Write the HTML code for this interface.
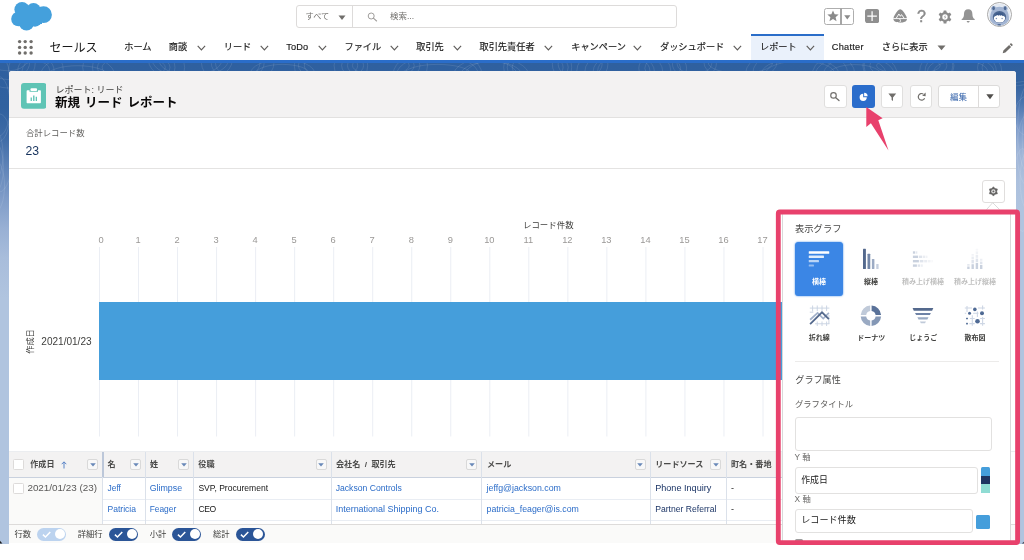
<!DOCTYPE html>
<html lang="ja">
<head>
<meta charset="utf-8">
<title>新規 リード レポート</title>
<style>
*{box-sizing:border-box;margin:0;padding:0}
html,body{width:1024px;height:560px;overflow:hidden;background:#fff}
body{position:relative;font-family:"Liberation Sans","Noto Sans CJK JP",sans-serif;color:#3e3e3c;font-size:9px;line-height:1}
#wrap{position:absolute;left:0;top:0;width:1024px;height:560px;will-change:transform}
.abs{position:absolute}
.t{position:absolute;white-space:nowrap;line-height:1}
/* global header */
#ghead{position:absolute;left:0;top:0;width:1024px;height:60px;background:#fff}
.nav{position:absolute;top:42.200px;font-size:9.200px;-webkit-text-stroke:0.150px #181818;color:#181818;white-space:nowrap;line-height:10px}
.chev{position:absolute;top:45px;width:9px;height:6px}
/* background */
#bgline{position:absolute;left:0;top:60px;width:1024px;height:3px;background:#2a6dc9}
#bg{position:absolute;left:0;top:63px;width:1024px;height:480.5px;background:linear-gradient(to bottom,#2f609f 0px,#30619f 45px,#3f6ca7 75px,#5f84b8 105px,#7f9cc8 135px,#98b0d4 165px,#a8bddb 195px,#b0c4df 235px,#b0c4df 480px)}
#bgr{position:absolute;left:1010px;top:63px;width:14px;height:480.5px;background:linear-gradient(to bottom,#2f609f 0px,#33639f 20px,#4a74ae 40px,#7b99c8 64px,#9fb5d7 91px,#acc0dd 117px,#b0c4df 145px,#b0c4df 480px)}
/* panel */
/* table */
.td{position:absolute;font-size:9px;white-space:nowrap;line-height:10px}
/* popover */
.tl{position:absolute;font-size:7px;font-weight:bold;color:#3e3e3c;white-space:nowrap;line-height:8px;text-align:center;width:60px}
.inp{position:absolute;background:#fff;border:1px solid #e2e1e0;border-radius:3px}
</style>
</head>
<body>
<div id="wrap">
<div id="ghead">
<svg class="abs" style="left:0;top:0" width="64" height="34" viewBox="0 0 64 34"><g fill="#44a0dc"><circle cx="22" cy="9.5" r="7.6"/><circle cx="33.5" cy="10.5" r="7.4"/><circle cx="43.5" cy="14.7" r="8.4"/><circle cx="18.5" cy="19" r="7.3"/><circle cx="26.5" cy="23" r="7.6"/><circle cx="35" cy="19.5" r="7.2"/><rect x="20" y="10" width="22" height="14"/></g></svg>
<svg class="abs" style="left:0;top:0" width="40" height="60" viewBox="0 0 40 60"><g fill="#706e6b"><circle cx="19.6" cy="41.6" r="1.7"/><circle cx="25.2" cy="41.6" r="1.7"/><circle cx="31.1" cy="41.6" r="1.7"/><circle cx="19.6" cy="47.4" r="1.7"/><circle cx="25.2" cy="47.4" r="1.7"/><circle cx="31.1" cy="47.4" r="1.7"/><circle cx="19.6" cy="53.0" r="1.7"/><circle cx="25.2" cy="53.0" r="1.7"/><circle cx="31.1" cy="53.0" r="1.7"/></g></svg>
<div class="t" style="left:49.4px;top:40.5px;font-size:12px;line-height:14px;color:#181818">セールス</div>
<div class="abs" style="left:296px;top:5px;width:381px;height:22.5px;border:1px solid #dddbda;border-radius:3px;background:#fff"></div>
<div class="abs" style="left:352px;top:5px;width:1px;height:22.5px;background:#dddbda"></div>
<div class="t" style="left:305.600px;top:11.800px;font-size:8.200px;line-height:10px;color:#706e6b">すべて</div>
<svg class="abs" style="left:337.5px;top:14.5px" width="8" height="6" viewBox="0 0 8 6"><path d="M0.5 0.5h7L4 5z" fill="#706e6b"/></svg>
<svg class="abs" style="left:367px;top:11.500px" width="11" height="10" viewBox="0 0 11 10"><circle cx="4.2" cy="4" r="3" fill="none" stroke="#a09e9c" stroke-width="1"/><path d="M6.4 6.2L9.6 9" stroke="#a09e9c" stroke-width="1.1" stroke-linecap="round"/></svg>
<div class="t" style="left:390px;top:11px;font-size:8.5px;line-height:10px;color:#706e6b">検索...</div>
<div class="abs" style="left:824px;top:7.600px;width:29.800px;height:17.300px;border:1.200px solid #aeaeae;border-radius:2.500px"></div>
<div class="abs" style="left:840.200px;top:7.600px;width:1.400px;height:17.300px;background:#a6a6a6"></div>
<svg class="abs" style="left:826.600px;top:10.400px" width="12" height="12" viewBox="0 0 12 12"><path d="M6 0.500l1.650 3.750 4 .35-3.050 2.650.95 3.950L6 9.100 2.450 11.200l.95-3.950L.35 4.600l4-.35z" fill="#8a8a8a"/></svg>
<svg class="abs" style="left:844.400px;top:14.800px" width="7" height="5" viewBox="0 0 7 5"><path d="M0.200 0.300h6.200L3.300 4.400z" fill="#8a8a8a"/></svg>
<svg class="abs" style="left:865.300px;top:9.100px" width="14.200" height="14.200" viewBox="0 0 14.200 14.200"><rect width="14.200" height="14.200" rx="2.600" fill="#8f8f8f"/><path d="M7.100 2.300v9.600M2.300 7.100h9.600" stroke="#fff" stroke-width="1.250"/></svg>
<svg class="abs" style="left:892.500px;top:9.400px" width="14.400" height="14.200" viewBox="0 0 14.400 14.200"><path d="M7.200 0.300c.9 0 1.700.5 2.500 1.500 1.700 2.100 4.300 5.700 4.300 8 0 2.600-3 3.900-6.800 3.900S.400 12.400.400 9.800c0-2.300 2.600-5.900 4.300-8C5.500.8 6.300.3 7.200.3z" fill="#8f8f8f"/><path d="M0.300 9.600h13.800" stroke="#fff" stroke-width="0.900" fill="none"/><path d="M3.200 9.300L5.900 5l1.500 2.300L8.500 5.600l2.700 3.700M6.600 9.800l.9 1.700-.6 1.900" stroke="#fff" stroke-width="0.950" fill="none" stroke-linejoin="round"/></svg>
<div class="t" style="left:917px;top:8.2px;font-size:16px;line-height:17px;color:#8c8c8c;-webkit-text-stroke:0.450px #8c8c8c">?</div>
<svg class="abs" style="left:938px;top:10px" width="14" height="14" viewBox="-7 -7 14 14"><g fill="#8c8c8c"><rect x="-1.5" y="-6.6" width="3" height="3.4" rx="0.6" transform="rotate(0)"/><rect x="-1.5" y="-6.6" width="3" height="3.4" rx="0.6" transform="rotate(60)"/><rect x="-1.5" y="-6.6" width="3" height="3.4" rx="0.6" transform="rotate(120)"/><rect x="-1.5" y="-6.6" width="3" height="3.4" rx="0.6" transform="rotate(180)"/><rect x="-1.5" y="-6.6" width="3" height="3.4" rx="0.6" transform="rotate(240)"/><rect x="-1.5" y="-6.6" width="3" height="3.4" rx="0.6" transform="rotate(300)"/><circle r="4.9"/></g><circle r="2.700" fill="#fff"/><path d="M0.400-1.900L-1 0.300h1L-0.300 1.900 1.100-0.300h-1z" fill="#8c8c8c"/></svg>
<svg class="abs" style="left:960.5px;top:9.4px" width="14.4" height="14" viewBox="0 0 14.4 14"><path d="M7.2 0.300c2.800 0 4.200 2 4.200 4.600 0 2.900.8 4.300 2.300 5.200v.9H.7v-.9C2.200 9.200 3 7.800 3 4.900 3 2.300 4.400.3 7.200.3z" fill="#939393"/><path d="M5.700 12h3c0 .9-.6 1.500-1.500 1.500S5.700 12.900 5.700 12z" fill="#939393"/></svg>
<svg class="abs" style="left:986.700px;top:2.200px" width="25" height="25" viewBox="-12.500 -12.500 25 25"><defs><clipPath id="avc"><circle r="10.900"/></clipPath></defs><circle r="12" fill="#fff" stroke="#9c9c9c" stroke-width="0.900"/><circle r="10.900" fill="#e3e9f2"/><g clip-path="url(#avc)"><circle cx="-5.900" cy="-6" r="2.500" fill="#a3b5d3"/><circle cx="5.600" cy="-6" r="2.500" fill="#a3b5d3"/><path d="M-9.200 13c-.3-5-.6-9.500.3-13.500C-8-4.800-4.800-7.700 0-7.700S8-4.800 8.900-.5c.9 4 .6 8.500.3 13.500z" fill="#a3b5d3"/><ellipse cx="-5.900" cy="-6.200" rx="1.250" ry="2" fill="#4f6a94"/><ellipse cx="5.600" cy="-6.200" rx="1.250" ry="2" fill="#4f6a94"/><ellipse cx="0" cy="2.600" rx="6.700" ry="6" fill="#4a6590"/><ellipse cx="0" cy="3.500" rx="5.700" ry="4.500" fill="#fff"/><path d="M-5.600 2.600c.3-2.600 2.600-4.300 5.600-4.300s5.300 1.700 5.600 4.300c-.8-.9-1.500-1.400-2.200-1.700l-.3.900-1.100-1.300-.7 1-1-1.300-.9 1.200-.9-.9c-1.500.5-3 1.100-4.100 2.100z" fill="#3c5a8a"/><circle cx="-3.100" cy="3.900" r="0.750" fill="#8093b8"/><circle cx="2.600" cy="3.900" r="0.750" fill="#8093b8"/><ellipse cx="-0.300" cy="10.900" rx="2" ry="1.400" fill="#4f6a94"/></g></svg>
<div class="abs" style="left:750.5px;top:33.900px;width:73px;height:26.100px;background:#eaf1fb;border-top:2px solid #2a6dc9"></div>
<div class="nav" style="left:124.25px;">ホーム</div>
<div class="nav" style="left:168.75px;">商談</div>
<svg class="chev" style="left:197px" viewBox="0 0 9 6"><path d="M0.700 0.800L4.400 4.800 8.100 0.800" fill="none" stroke="#5f5d5b" stroke-width="1.150"/></svg>
<div class="nav" style="left:223.75px;">リード</div>
<svg class="chev" style="left:260px" viewBox="0 0 9 6"><path d="M0.700 0.800L4.400 4.800 8.100 0.800" fill="none" stroke="#5f5d5b" stroke-width="1.150"/></svg>
<div class="nav" style="left:286.25px;letter-spacing:0.1px;">ToDo</div>
<svg class="chev" style="left:318px" viewBox="0 0 9 6"><path d="M0.700 0.800L4.400 4.800 8.100 0.800" fill="none" stroke="#5f5d5b" stroke-width="1.150"/></svg>
<div class="nav" style="left:344.5px;">ファイル</div>
<svg class="chev" style="left:390px" viewBox="0 0 9 6"><path d="M0.700 0.800L4.400 4.800 8.100 0.800" fill="none" stroke="#5f5d5b" stroke-width="1.150"/></svg>
<div class="nav" style="left:416.25px;">取引先</div>
<svg class="chev" style="left:452.5px" viewBox="0 0 9 6"><path d="M0.700 0.800L4.400 4.800 8.100 0.800" fill="none" stroke="#5f5d5b" stroke-width="1.150"/></svg>
<div class="nav" style="left:479.5px;">取引先責任者</div>
<svg class="chev" style="left:544px" viewBox="0 0 9 6"><path d="M0.700 0.800L4.400 4.800 8.100 0.800" fill="none" stroke="#5f5d5b" stroke-width="1.150"/></svg>
<div class="nav" style="left:571.25px;">キャンペーン</div>
<svg class="chev" style="left:633.2px" viewBox="0 0 9 6"><path d="M0.700 0.800L4.400 4.800 8.100 0.800" fill="none" stroke="#5f5d5b" stroke-width="1.150"/></svg>
<div class="nav" style="left:660px;">ダッシュボード</div>
<svg class="chev" style="left:733px" viewBox="0 0 9 6"><path d="M0.700 0.800L4.400 4.800 8.100 0.800" fill="none" stroke="#5f5d5b" stroke-width="1.150"/></svg>
<div class="nav" style="left:760px;">レポート</div>
<svg class="chev" style="left:805.5px" viewBox="0 0 9 6"><path d="M0.700 0.800L4.400 4.800 8.100 0.800" fill="none" stroke="#5f5d5b" stroke-width="1.150"/></svg>
<div class="nav" style="left:831.75px;letter-spacing:0.28px;">Chatter</div>
<div class="nav" style="left:881.75px;">さらに表示</div>
<svg class="abs" style="left:936.5px;top:44.800px" width="9" height="6" viewBox="0 0 9 6"><path d="M0.500 0.500h8L4.500 5.300z" fill="#706e6b"/></svg>
<svg class="abs" style="left:1002.300px;top:43px" width="11" height="11" viewBox="0 0 11 11"><path d="M0.700 10.300l.7-2.700 5.700-5.700 2 2-5.700 5.700zM7.700 1.300l.8-.8c.3-.3.700-.3 1 0l1 1c.3.300.3.700 0 1l-.8.800z" fill="#706e6b"/></svg>
</div>
<div id="bgline"></div>
<div id="bg"></div>
<div id="bgr"></div>
<svg class="abs" style="left:0;top:63px" width="1024" height="200" viewBox="0 63 1024 200"><g fill="none" stroke="#fff" stroke-opacity="0.130" stroke-width="0.800"><ellipse cx="7.8" cy="62.1" rx="17.8" ry="8.7"/><ellipse cx="7.8" cy="62.1" rx="21.9" ry="17.4"/><ellipse cx="7.8" cy="62.1" rx="27.5" ry="25.9"/><ellipse cx="35.9" cy="70.4" rx="13.8" ry="9.4"/><ellipse cx="35.9" cy="70.4" rx="18.1" ry="14.7"/><ellipse cx="35.9" cy="70.4" rx="27.4" ry="24.6"/><ellipse cx="77.6" cy="76.0" rx="30.6" ry="10.3"/><ellipse cx="77.6" cy="76.0" rx="37.3" ry="20.7"/><ellipse cx="133.7" cy="67.4" rx="31.6" ry="11.1"/><ellipse cx="133.7" cy="67.4" rx="36.3" ry="15.0"/><ellipse cx="133.7" cy="67.4" rx="41.3" ry="25.6"/><ellipse cx="133.7" cy="67.4" rx="51.0" ry="30.5"/><ellipse cx="190.4" cy="60.1" rx="31.4" ry="15.1"/><ellipse cx="190.4" cy="60.1" rx="38.0" ry="17.1"/><ellipse cx="190.4" cy="60.1" rx="41.9" ry="22.8"/><ellipse cx="237.7" cy="63.2" rx="22.2" ry="14.4"/><ellipse cx="237.7" cy="63.2" rx="26.4" ry="16.7"/><ellipse cx="237.7" cy="63.2" rx="36.2" ry="22.2"/><ellipse cx="282.6" cy="74.0" rx="27.1" ry="9.6"/><ellipse cx="282.6" cy="74.0" rx="32.3" ry="14.6"/><ellipse cx="331.0" cy="65.5" rx="26.7" ry="12.7"/><ellipse cx="331.0" cy="65.5" rx="32.6" ry="14.6"/><ellipse cx="331.0" cy="65.5" rx="36.7" ry="24.7"/><ellipse cx="380.8" cy="65.5" rx="28.4" ry="9.9"/><ellipse cx="380.8" cy="65.5" rx="33.4" ry="14.4"/><ellipse cx="380.8" cy="65.5" rx="39.2" ry="18.3"/><ellipse cx="380.8" cy="65.5" rx="46.7" ry="30.2"/><ellipse cx="437.5" cy="74.7" rx="34.0" ry="10.3"/><ellipse cx="437.5" cy="74.7" rx="40.9" ry="19.2"/><ellipse cx="437.5" cy="74.7" rx="44.4" ry="25.5"/><ellipse cx="491.1" cy="76.4" rx="26.5" ry="15.2"/><ellipse cx="491.1" cy="76.4" rx="31.3" ry="15.0"/><ellipse cx="491.1" cy="76.4" rx="38.1" ry="19.3"/><ellipse cx="537.7" cy="67.3" rx="25.4" ry="14.3"/><ellipse cx="537.7" cy="67.3" rx="30.5" ry="15.3"/><ellipse cx="537.7" cy="67.3" rx="34.0" ry="25.9"/><ellipse cx="580.1" cy="64.2" rx="22.0" ry="13.9"/><ellipse cx="580.1" cy="64.2" rx="27.8" ry="20.8"/><ellipse cx="623.8" cy="70.9" rx="26.1" ry="16.0"/><ellipse cx="623.8" cy="70.9" rx="30.5" ry="17.2"/><ellipse cx="623.8" cy="70.9" rx="38.8" ry="21.3"/><ellipse cx="623.8" cy="70.9" rx="47.0" ry="26.8"/><ellipse cx="662.7" cy="68.2" rx="17.9" ry="11.5"/><ellipse cx="662.7" cy="68.2" rx="23.9" ry="16.4"/><ellipse cx="694.4" cy="63.8" rx="17.4" ry="9.9"/><ellipse cx="694.4" cy="63.8" rx="22.0" ry="14.9"/><ellipse cx="740.4" cy="62.8" rx="32.1" ry="10.5"/><ellipse cx="740.4" cy="62.8" rx="36.4" ry="17.6"/><ellipse cx="800.2" cy="73.1" rx="34.2" ry="12.0"/><ellipse cx="800.2" cy="73.1" rx="38.4" ry="14.7"/><ellipse cx="800.2" cy="73.1" rx="47.4" ry="25.2"/><ellipse cx="800.2" cy="73.1" rx="54.5" ry="25.7"/><ellipse cx="854.8" cy="76.0" rx="27.3" ry="11.4"/><ellipse cx="854.8" cy="76.0" rx="31.9" ry="19.4"/><ellipse cx="854.8" cy="76.0" rx="40.1" ry="20.7"/><ellipse cx="854.8" cy="76.0" rx="42.8" ry="27.0"/><ellipse cx="908.4" cy="65.6" rx="31.8" ry="8.4"/><ellipse cx="908.4" cy="65.6" rx="38.5" ry="14.0"/><ellipse cx="908.4" cy="65.6" rx="45.6" ry="23.3"/><ellipse cx="908.4" cy="65.6" rx="44.4" ry="24.3"/><ellipse cx="960.7" cy="71.4" rx="26.8" ry="11.1"/><ellipse cx="960.7" cy="71.4" rx="33.2" ry="14.7"/><ellipse cx="960.7" cy="71.4" rx="35.7" ry="22.9"/><ellipse cx="960.7" cy="71.4" rx="41.1" ry="26.2"/><ellipse cx="1011.9" cy="67.6" rx="29.8" ry="15.0"/><ellipse cx="1011.9" cy="67.6" rx="34.4" ry="18.4"/><ellipse cx="1055.7" cy="77.8" rx="19.9" ry="11.5"/><ellipse cx="1055.7" cy="77.8" rx="24.2" ry="18.6"/><ellipse cx="1055.7" cy="77.8" rx="28.6" ry="22.5"/><ellipse cx="-2.9" cy="167.4" rx="6.3" ry="22.4"/><ellipse cx="1028.5" cy="180.5" rx="8.4" ry="30.4"/><ellipse cx="-5.1" cy="186.0" rx="9.6" ry="26.2"/><ellipse cx="1029.7" cy="128.9" rx="12.1" ry="45.7"/><ellipse cx="-1.2" cy="97.7" rx="13.3" ry="44.0"/><ellipse cx="1022.4" cy="190.0" rx="9.3" ry="41.3"/><ellipse cx="-0.7" cy="152.9" rx="13.5" ry="39.1"/><ellipse cx="1029.2" cy="137.9" rx="6.9" ry="36.7"/><ellipse cx="-1.5" cy="106.3" rx="11.7" ry="29.8"/><ellipse cx="1028.3" cy="115.9" rx="13.8" ry="20.1"/><ellipse cx="-4.0" cy="154.8" rx="7.0" ry="23.3"/><ellipse cx="1027.4" cy="150.1" rx="10.2" ry="35.6"/></g></svg>
<div class="abs" style="left:8.600px;top:71px;width:1007px;height:472.5px;background:#fff;border-radius:3px 3px 0 0"></div>
<div class="abs" style="left:8.600px;top:71px;width:1007px;height:46.5px;background:#f3f2f2;border-bottom:1px solid #e2e1e0;border-radius:3px 3px 0 0"></div>
<svg class="abs" style="left:20.600px;top:83px" width="25.500" height="25.700" viewBox="0 0 25.500 25.700"><rect width="25.500" height="25.700" rx="3" fill="#5fc4b5"/><path d="M6.600 7.300h1.900v1.400h8.500V7.300h1.900c.6 0 1 .4 1 1v11c0 .6-.4 1-1 1H6.600c-.6 0-1-.4-1-1v-11c0-.6.400-1 1-1z" fill="#fff"/><rect x="9.400" y="5.300" width="6.700" height="2.700" rx="1.100" fill="#fff"/><path d="M9.600 14.500h1.300v3.600H9.600zM12.100 12.600h1.400v5.500h-1.400zM14.700 13.800h1.300v4.300h-1.300z" fill="#5fc4b5"/></svg>
<div class="t" style="left:55.600px;top:84.800px;font-size:9px;line-height:11px;color:#3e3e3c">レポート: リード</div>
<div class="t" style="left:55px;top:95.600px;font-size:12.500px;word-spacing:1.500px;line-height:14px;font-weight:bold;color:#080707">新規 リード レポート</div>
<div class="abs" style="left:824.4px;top:85.400px;width:22.200px;height:22.200px;background:#fff;border:1px solid #e0dfde;border-radius:3px"></div>
<div class="abs" style="left:881.3px;top:85.400px;width:22.200px;height:22.200px;background:#fff;border:1px solid #e0dfde;border-radius:3px"></div>
<div class="abs" style="left:909.9px;top:85.400px;width:22.200px;height:22.200px;background:#fff;border:1px solid #e0dfde;border-radius:3px"></div>
<div class="abs" style="left:852.400px;top:85.400px;width:22.700px;height:22.300px;background:#2b6dcb;border-radius:3px"></div>
<div class="abs" style="left:938.300px;top:85.400px;width:62.100px;height:22.200px;background:#fff;border:1px solid #dcdbda;border-radius:3px"></div>
<div class="abs" style="left:978px;top:85.400px;width:1px;height:22.200px;background:#dddbda"></div>
<div class="t" style="left:950px;top:91.500px;font-size:8.500px;line-height:10px;color:#2f5fa8">編集</div>
<svg class="abs" style="left:986px;top:94px" width="8" height="6" viewBox="0 0 8 6"><path d="M0.300 0.300h7.400L4 5.200z" fill="#514f4d"/></svg>
<svg class="abs" style="left:829.200px;top:91.200px" width="12" height="12" viewBox="0 0 12 12"><circle cx="4.500" cy="4.400" r="2.750" fill="none" stroke="#706e6b" stroke-width="1.150"/><path d="M6.500 6.500L10 9.500" stroke="#706e6b" stroke-width="1.300" stroke-linecap="round"/></svg>
<svg class="abs" style="left:859px;top:92px" width="10" height="10" viewBox="0 0 10 10"><path d="M4.200 1.700v3.600h3.600a3.600 3.600 0 1 1-3.600-3.600z" fill="#fff"/><path d="M5.100 0.800a3.500 3.500 0 0 1 3.500 3.500h-3.500z" fill="#fff"/></svg>
<svg class="abs" style="left:888px;top:92.500px" width="9" height="9" viewBox="0 0 9 9"><path d="M0.400 0.600h7.800L5 4.400v3.600L3.600 7V4.400z" fill="#706e6b"/></svg>
<svg class="abs" style="left:916.500px;top:92px" width="10" height="10" viewBox="0 0 10 10"><path d="M7.600 6.200A3.300 3.300 0 1 1 6.300 2" fill="none" stroke="#706e6b" stroke-width="1.200"/><path d="M5.200 3.800L8.600 0.600v3.600z" fill="#706e6b"/></svg>
<div class="abs" style="left:8.600px;top:168px;width:1007px;height:1px;background:#e4e3e2"></div>
<div class="t" style="left:26px;top:127.500px;font-size:8.400px;line-height:10px;color:#5f5e5c">合計レコード数</div>
<div class="t" style="left:25.500px;top:143.500px;font-size:12.200px;line-height:14px;color:#16325c">23</div>
<div class="abs" style="left:982px;top:180px;width:23px;height:22.500px;background:#fff;border:1px solid #e0dedd;border-radius:3px"></div>
<svg class="abs" style="left:988px;top:186px" width="11" height="11" viewBox="-5.400 -5.400 11 11"><polygon points="0.00,-4.70 1.65,-2.86 4.07,-2.35 3.30,0.00 4.07,2.35 1.65,2.86 0.00,4.70 -1.65,2.86 -4.07,2.35 -3.30,0.00 -4.07,-2.35 -1.65,-2.86" fill="#626160" stroke="#626160" stroke-width="0.500" stroke-linejoin="round"/><circle r="2.150" fill="#fff" fill-opacity="0.800"/><circle r="0.950" fill="#626160"/></svg>
<svg class="abs" style="left:0;top:0;font-family:'Liberation Sans','Noto Sans CJK JP',sans-serif" width="1024" height="560" viewBox="0 0 1024 560"><line x1="99.50" y1="247" x2="99.50" y2="436.500" stroke="#ebeef4" stroke-width="1"/><text x="101.10" y="243" text-anchor="middle" font-size="9.300" fill="#9a9896">0</text><line x1="138.53" y1="247" x2="138.53" y2="436.500" stroke="#ebeef4" stroke-width="1"/><text x="138.03" y="243" text-anchor="middle" font-size="9.300" fill="#9a9896">1</text><line x1="177.56" y1="247" x2="177.56" y2="436.500" stroke="#ebeef4" stroke-width="1"/><text x="177.06" y="243" text-anchor="middle" font-size="9.300" fill="#9a9896">2</text><line x1="216.59" y1="247" x2="216.59" y2="436.500" stroke="#ebeef4" stroke-width="1"/><text x="216.09" y="243" text-anchor="middle" font-size="9.300" fill="#9a9896">3</text><line x1="255.62" y1="247" x2="255.62" y2="436.500" stroke="#ebeef4" stroke-width="1"/><text x="255.12" y="243" text-anchor="middle" font-size="9.300" fill="#9a9896">4</text><line x1="294.65" y1="247" x2="294.65" y2="436.500" stroke="#ebeef4" stroke-width="1"/><text x="294.15" y="243" text-anchor="middle" font-size="9.300" fill="#9a9896">5</text><line x1="333.68" y1="247" x2="333.68" y2="436.500" stroke="#ebeef4" stroke-width="1"/><text x="333.18" y="243" text-anchor="middle" font-size="9.300" fill="#9a9896">6</text><line x1="372.71" y1="247" x2="372.71" y2="436.500" stroke="#ebeef4" stroke-width="1"/><text x="372.21" y="243" text-anchor="middle" font-size="9.300" fill="#9a9896">7</text><line x1="411.74" y1="247" x2="411.74" y2="436.500" stroke="#ebeef4" stroke-width="1"/><text x="411.24" y="243" text-anchor="middle" font-size="9.300" fill="#9a9896">8</text><line x1="450.77" y1="247" x2="450.77" y2="436.500" stroke="#ebeef4" stroke-width="1"/><text x="450.27" y="243" text-anchor="middle" font-size="9.300" fill="#9a9896">9</text><line x1="489.80" y1="247" x2="489.80" y2="436.500" stroke="#ebeef4" stroke-width="1"/><text x="489.30" y="243" text-anchor="middle" font-size="9.300" fill="#9a9896">10</text><line x1="528.83" y1="247" x2="528.83" y2="436.500" stroke="#ebeef4" stroke-width="1"/><text x="528.33" y="243" text-anchor="middle" font-size="9.300" fill="#9a9896">11</text><line x1="567.86" y1="247" x2="567.86" y2="436.500" stroke="#ebeef4" stroke-width="1"/><text x="567.36" y="243" text-anchor="middle" font-size="9.300" fill="#9a9896">12</text><line x1="606.89" y1="247" x2="606.89" y2="436.500" stroke="#ebeef4" stroke-width="1"/><text x="606.39" y="243" text-anchor="middle" font-size="9.300" fill="#9a9896">13</text><line x1="645.92" y1="247" x2="645.92" y2="436.500" stroke="#ebeef4" stroke-width="1"/><text x="645.42" y="243" text-anchor="middle" font-size="9.300" fill="#9a9896">14</text><line x1="684.95" y1="247" x2="684.95" y2="436.500" stroke="#ebeef4" stroke-width="1"/><text x="684.45" y="243" text-anchor="middle" font-size="9.300" fill="#9a9896">15</text><line x1="723.98" y1="247" x2="723.98" y2="436.500" stroke="#ebeef4" stroke-width="1"/><text x="723.48" y="243" text-anchor="middle" font-size="9.300" fill="#9a9896">16</text><line x1="763.01" y1="247" x2="763.01" y2="436.500" stroke="#ebeef4" stroke-width="1"/><text x="762.51" y="243" text-anchor="middle" font-size="9.300" fill="#9a9896">17</text><rect x="99" y="302" width="700" height="78" fill="#459edb"/><text x="548.300" y="227.600" text-anchor="middle" font-size="8.450" fill="#3e3e3c">レコード件数</text><text x="41.300" y="345" font-size="10.050" fill="#3e3e3c">2021/01/23</text><text transform="translate(33,341.500) rotate(-90)" text-anchor="middle" font-size="8.200" fill="#3e3e3c">作成日</text></svg>
<div class="abs" style="left:9px;top:451px;width:1006.500px;height:27px;background:#f3f2f2;border-top:1px solid #ebedf0;border-bottom:1px solid #c9d1de"></div>
<div class="abs" style="left:9px;top:478px;width:93px;height:47px;background:#fafaf9"></div>
<div class="abs" style="left:103px;top:499px;width:912.500px;height:1px;background:#e9edf3"></div>
<div class="abs" style="left:103px;top:520.300px;width:912.500px;height:1px;background:#e9edf3"></div>
<div class="abs" style="left:102px;top:452px;width:1px;height:73px;background:#dbe1ea"></div>
<div class="abs" style="left:145px;top:452px;width:1px;height:73px;background:#dbe1ea"></div>
<div class="abs" style="left:193px;top:452px;width:1px;height:73px;background:#dbe1ea"></div>
<div class="abs" style="left:331px;top:452px;width:1px;height:73px;background:#dbe1ea"></div>
<div class="abs" style="left:481px;top:452px;width:1px;height:73px;background:#dbe1ea"></div>
<div class="abs" style="left:650px;top:452px;width:1px;height:73px;background:#dbe1ea"></div>
<div class="abs" style="left:726px;top:452px;width:1px;height:73px;background:#dbe1ea"></div>
<div class="abs" style="left:102px;top:452px;width:1.500px;height:25px;background:#bcc7d9"></div>
<div class="t" style="left:30.2px;top:459.500px;font-size:8.100px;line-height:10px;font-weight:bold;color:#4a4a49">作成日</div>
<div class="t" style="left:107.4px;top:459.500px;font-size:8.100px;line-height:10px;font-weight:bold;color:#4a4a49">名</div>
<div class="t" style="left:150px;top:459.500px;font-size:8.100px;line-height:10px;font-weight:bold;color:#4a4a49">姓</div>
<div class="t" style="left:198.3px;top:459.500px;font-size:8.100px;line-height:10px;font-weight:bold;color:#4a4a49">役職</div>
<div class="t" style="left:336px;top:459.500px;font-size:8.100px;line-height:10px;font-weight:bold;color:#4a4a49;word-spacing:2.200px">会社名 / 取引先</div>
<div class="t" style="left:487px;top:459.500px;font-size:8.100px;line-height:10px;font-weight:bold;color:#4a4a49">メール</div>
<div class="t" style="left:655.2px;top:459.500px;font-size:8.100px;line-height:10px;font-weight:bold;color:#4a4a49">リードソース</div>
<div class="t" style="left:731px;top:459.500px;font-size:8.100px;line-height:10px;font-weight:bold;color:#4a4a49">町名・番地</div>
<svg class="abs" style="left:60.500px;top:460.500px" width="6" height="8" viewBox="0 0 6 8"><path d="M3 7.500V1M0.700 3.200L3 0.800 5.300 3.200" fill="none" stroke="#4a78c2" stroke-width="0.900"/></svg>
<div class="abs" style="left:87px;top:459px;width:11.200px;height:11px;background:#f8f8f8;border:1px solid #d9d9d9;border-radius:2px"></div>
<svg class="abs" style="left:89.7px;top:462.800px" width="6" height="4" viewBox="0 0 6 4"><path d="M0.200 0.200h5.600L3 3.600z" fill="#6888b8"/></svg>
<div class="abs" style="left:130px;top:459px;width:11.200px;height:11px;background:#f8f8f8;border:1px solid #d9d9d9;border-radius:2px"></div>
<svg class="abs" style="left:132.7px;top:462.800px" width="6" height="4" viewBox="0 0 6 4"><path d="M0.200 0.200h5.600L3 3.600z" fill="#6888b8"/></svg>
<div class="abs" style="left:178px;top:459px;width:11.200px;height:11px;background:#f8f8f8;border:1px solid #d9d9d9;border-radius:2px"></div>
<svg class="abs" style="left:180.7px;top:462.800px" width="6" height="4" viewBox="0 0 6 4"><path d="M0.200 0.200h5.600L3 3.600z" fill="#6888b8"/></svg>
<div class="abs" style="left:315.5px;top:459px;width:11.200px;height:11px;background:#f8f8f8;border:1px solid #d9d9d9;border-radius:2px"></div>
<svg class="abs" style="left:318.2px;top:462.800px" width="6" height="4" viewBox="0 0 6 4"><path d="M0.200 0.200h5.600L3 3.600z" fill="#6888b8"/></svg>
<div class="abs" style="left:466px;top:459px;width:11.200px;height:11px;background:#f8f8f8;border:1px solid #d9d9d9;border-radius:2px"></div>
<svg class="abs" style="left:468.7px;top:462.800px" width="6" height="4" viewBox="0 0 6 4"><path d="M0.200 0.200h5.600L3 3.600z" fill="#6888b8"/></svg>
<div class="abs" style="left:634.7px;top:459px;width:11.200px;height:11px;background:#f8f8f8;border:1px solid #d9d9d9;border-radius:2px"></div>
<svg class="abs" style="left:637.4000000000001px;top:462.800px" width="6" height="4" viewBox="0 0 6 4"><path d="M0.200 0.200h5.600L3 3.600z" fill="#6888b8"/></svg>
<div class="abs" style="left:710.2px;top:459px;width:11.200px;height:11px;background:#f8f8f8;border:1px solid #d9d9d9;border-radius:2px"></div>
<svg class="abs" style="left:712.9000000000001px;top:462.800px" width="6" height="4" viewBox="0 0 6 4"><path d="M0.200 0.200h5.600L3 3.600z" fill="#6888b8"/></svg>
<div class="abs" style="left:13px;top:459px;width:11px;height:11px;background:#fff;border:1px solid #dddbda;border-radius:1.500px"></div>
<div class="abs" style="left:13px;top:483px;width:11px;height:10.800px;background:#fff;border:1px solid #dddbda;border-radius:1.500px"></div>
<div class="t" style="left:27.400px;top:481.900px;font-size:9.900px;line-height:11px;color:#5a5958">2021/01/23 (23)</div>
<div class="td" style="left:107.5px;top:482.8px;font-size:8.45px;color:#2b6cc8">Jeff</div>
<div class="td" style="left:149.7px;top:482.8px;font-size:8.85px;color:#2b6cc8">Glimpse</div>
<div class="td" style="left:198.4px;top:482.8px;font-size:8.55px;color:#181818">SVP, Procurement</div>
<div class="td" style="left:335.7px;top:482.8px;font-size:8.65px;color:#2b6cc8">Jackson Controls</div>
<div class="td" style="left:486.6px;top:482.8px;font-size:8.8px;color:#2b6cc8">jeffg@jackson.com</div>
<div class="td" style="left:655.2px;top:482.8px;font-size:9.1px;color:#1c3566">Phone Inquiry</div>
<div class="td" style="left:731px;top:482.8px;font-size:9px;color:#181818">-</div>
<div class="td" style="left:107.5px;top:504.4px;font-size:8.55px;color:#2b6cc8">Patricia</div>
<div class="td" style="left:149.7px;top:504.4px;font-size:8.4px;color:#2b6cc8">Feager</div>
<div class="td" style="left:198.4px;top:504.4px;font-size:8.6px;color:#181818;letter-spacing:-0.400px">CEO</div>
<div class="td" style="left:335.7px;top:504.4px;font-size:8.98px;color:#2b6cc8">International Shipping Co.</div>
<div class="td" style="left:486.6px;top:504.4px;font-size:8.77px;color:#2b6cc8">patricia_feager@is.com</div>
<div class="td" style="left:655.2px;top:504.4px;font-size:8.6px;color:#1c3566">Partner Referral</div>
<div class="td" style="left:731px;top:504.4px;font-size:9px;color:#181818">-</div>
<div class="abs" style="left:9px;top:524.200px;width:1006.500px;height:19.300px;background:#fafaf9;border-top:1px solid #dddbda"></div>
<div class="t" style="left:14.5px;top:529px;font-size:8.300px;line-height:10px;color:#3e3e3c">行数</div>
<div class="t" style="left:77.7px;top:529px;font-size:8.300px;line-height:10px;color:#3e3e3c">詳細行</div>
<div class="t" style="left:149.7px;top:529px;font-size:8.300px;line-height:10px;color:#3e3e3c">小計</div>
<div class="t" style="left:213px;top:529px;font-size:8.300px;line-height:10px;color:#3e3e3c">総計</div>
<div class="abs" style="left:37.4px;top:527.800px;width:29px;height:13px;border-radius:6.500px;background:#bcd3ef"><i style="position:absolute;right:1.500px;top:1.500px;width:10px;height:10px;border-radius:5px;background:#fff;display:block"></i><svg style="position:absolute;left:4.600px;top:3.100px" width="9.200" height="6.900" viewBox="0 0 8 6"><path d="M0.800 3.200L3 5.200 7.200 0.800" fill="none" stroke="#fff" stroke-width="1.300"/></svg></div>
<div class="abs" style="left:109px;top:527.800px;width:29px;height:13px;border-radius:6.500px;background:#2b5597"><i style="position:absolute;right:1.500px;top:1.500px;width:10px;height:10px;border-radius:5px;background:#fff;display:block"></i><svg style="position:absolute;left:4.600px;top:3.100px" width="9.200" height="6.900" viewBox="0 0 8 6"><path d="M0.800 3.200L3 5.200 7.200 0.800" fill="none" stroke="#fff" stroke-width="1.300"/></svg></div>
<div class="abs" style="left:172.2px;top:527.800px;width:29px;height:13px;border-radius:6.500px;background:#2b5597"><i style="position:absolute;right:1.500px;top:1.500px;width:10px;height:10px;border-radius:5px;background:#fff;display:block"></i><svg style="position:absolute;left:4.600px;top:3.100px" width="9.200" height="6.900" viewBox="0 0 8 6"><path d="M0.800 3.200L3 5.200 7.200 0.800" fill="none" stroke="#fff" stroke-width="1.300"/></svg></div>
<div class="abs" style="left:235.6px;top:527.800px;width:29px;height:13px;border-radius:6.500px;background:#2b5597"><i style="position:absolute;right:1.500px;top:1.500px;width:10px;height:10px;border-radius:5px;background:#fff;display:block"></i><svg style="position:absolute;left:4.600px;top:3.100px" width="9.200" height="6.900" viewBox="0 0 8 6"><path d="M0.800 3.200L3 5.200 7.200 0.800" fill="none" stroke="#fff" stroke-width="1.300"/></svg></div>
<div class="abs" style="left:782.300px;top:209.500px;width:228.500px;height:334px;background:#fff;border:1px solid #d9d9d9"></div>
<svg class="abs" style="left:984px;top:200px" width="18" height="11" viewBox="0 0 18 11"><path d="M2.500 9.600L8.700 2.700 15.600 9.600" fill="#fff" stroke="#d0d0d0" stroke-width="0.800"/></svg>
<div class="t" style="left:795px;top:223.500px;font-size:9.300px;line-height:11px;color:#4a4a49">表示グラフ</div>
<div class="abs" style="left:794.600px;top:241.500px;width:48.800px;height:54.100px;background:#3b86e5;border-radius:3.500px;box-shadow:0 0 2px #3b86e5"></div>
<svg class="abs" style="left:808px;top:250px" width="24" height="18" viewBox="0 0 24 18"><g fill="#fff"><rect x="0.750" y="1.250" width="20.500" height="2.500" rx="0.500"/><rect x="0.750" y="5.600" width="15.200" height="2.400" rx="0.500" opacity="0.850"/><rect x="0.750" y="10" width="10.200" height="2.300" rx="0.500" opacity="0.650"/><rect x="0.750" y="14.400" width="5.200" height="2.200" rx="0.500" opacity="0.450"/></g></svg>
<svg class="abs" style="left:862px;top:248px" width="18" height="22" viewBox="0 0 18 22"><rect x="1" y="0.750" width="2.900" height="20.250" rx="0.500" fill="#54698d"/><rect x="5.500" y="5.750" width="2.750" height="15.250" rx="0.500" fill="#7487a8"/><rect x="9.900" y="11" width="2.500" height="10" rx="0.500" fill="#9cabc4"/><rect x="14.250" y="16" width="2.350" height="5" rx="0.500" fill="#c5cede"/></svg>
<svg class="abs" style="left:912px;top:250px;opacity:0.450" width="24" height="18" viewBox="0 0 24 18"><g fill="#8a9bb8"><rect x="0.900" y="1.300" width="2.200" height="2.400"/><rect x="3.700" y="1.300" width="1.600" height="2.400" opacity="0.500"/><rect x="0.900" y="5.600" width="5.200" height="2.400"/><rect x="7" y="5.600" width="3.200" height="2.400" opacity="0.600"/><rect x="11" y="5.600" width="2.300" height="2.400" opacity="0.400"/><rect x="14" y="5.600" width="1.500" height="2.400" opacity="0.250"/><rect x="0.900" y="10" width="6" height="2.400"/><rect x="7.800" y="10" width="3.600" height="2.400" opacity="0.600"/><rect x="12.200" y="10" width="3" height="2.400" opacity="0.400"/><rect x="16" y="10" width="2.600" height="2.400" opacity="0.250"/><rect x="19.400" y="10" width="1.500" height="2.400" opacity="0.150"/><rect x="0.900" y="14.400" width="4" height="2.400"/><rect x="5.700" y="14.400" width="2.500" height="2.400" opacity="0.600"/><rect x="9" y="14.400" width="1.800" height="2.400" opacity="0.350"/></g></svg>
<svg class="abs" style="left:966px;top:248px;opacity:0.450" width="18" height="22" viewBox="0 0 18 22"><g fill="#8a9bb8"><rect x="1.200" y="18.500" width="2.400" height="2.500"/><rect x="1.200" y="16" width="2.400" height="1.800" opacity="0.500"/><rect x="5.500" y="16.200" width="2.400" height="4.800"/><rect x="5.500" y="11.800" width="2.400" height="3.600" opacity="0.600"/><rect x="5.500" y="8.600" width="2.400" height="2.500" opacity="0.400"/><rect x="5.500" y="6" width="2.400" height="1.800" opacity="0.250"/><rect x="9.700" y="15" width="2.400" height="6"/><rect x="9.700" y="10.600" width="2.400" height="3.600" opacity="0.600"/><rect x="9.700" y="6.800" width="2.400" height="3" opacity="0.400"/><rect x="9.700" y="3.400" width="2.400" height="2.600" opacity="0.250"/><rect x="9.700" y="0.800" width="2.400" height="1.800" opacity="0.150"/><rect x="14" y="17" width="2.400" height="4"/><rect x="14" y="13.600" width="2.400" height="2.600" opacity="0.600"/><rect x="14" y="10.800" width="2.400" height="2" opacity="0.350"/></g></svg>
<div class="tl" style="left:789px;top:277.900px;color:#fff;opacity:1">横棒</div>
<div class="tl" style="left:841px;top:277.900px;color:#3e3e3c;opacity:1">縦棒</div>
<div class="tl" style="left:893px;top:277.900px;color:#3e3e3c;opacity:0.33">積み上げ横棒</div>
<div class="tl" style="left:945px;top:277.900px;color:#3e3e3c;opacity:0.33">積み上げ縦棒</div>
<svg class="abs" style="left:808.500px;top:305px" width="21" height="21" viewBox="0 0 21 21"><g stroke="#c7d1e1" stroke-width="0.900" fill="none"><path d="M0.800 3.100h19.600M6 18.750h14.400M3.600 0.500v6M8.250 0.500v5.500M13 0.500v5.500M17.600 0.500v5.500M8.250 16.500v4.500M13 16.500v4.500M17.600 16.500v4.500M19.900 10v9M0.800 7.200h3.500"/></g><path d="M1.100 14.750L8.600 7.900 14.250 13.500 19.900 7.900" fill="none" stroke="#a3b2cb" stroke-width="1.700"/><path d="M1.100 19.100L13 7.250 19.900 14.100" fill="none" stroke="#54698d" stroke-width="1.800"/></svg>
<svg class="abs" style="left:860px;top:305px" width="22" height="22" viewBox="-11 -11 22 22"><g transform="translate(-0.100,-0.250)"><path d="M0.700-10.200A10.200 10.200 0 0 1 10.200-0.700H4.700A4.700 4.700 0 0 0 0.700-4.700z" fill="#5a7299"/><path d="M10.200 0.700A10.200 10.200 0 0 1 0.700 10.200V4.700A4.700 4.700 0 0 0 4.700 0.700z" fill="#8497b5"/><path d="M-0.700 10.200A10.200 10.200 0 0 1-10.200 0.700H-4.700A4.700 4.700 0 0 0-0.700 4.700z" fill="#9aaac3"/><path d="M-10.200-0.700A10.200 10.200 0 0 1-0.700-10.200V-4.700A4.700 4.700 0 0 0-4.700-0.700z" fill="#c0cad9"/></g></svg>
<svg class="abs" style="left:912px;top:307px" width="22" height="18" viewBox="0 0 22 18"><path d="M0.600 1h20.700l-1.200 2.700H1.800z" fill="#54698d"/><path d="M3 5.900h15.900l-1.100 2.100H4.100z" fill="#6f83a6"/><path d="M5.400 10.250h11.100l-1.100 2.150H6.500z" fill="#9aaac3"/><path d="M7.900 14.400h6.100l-1 1.850H8.900z" fill="#c0cad9"/></svg>
<svg class="abs" style="left:964px;top:305px" width="22" height="22" viewBox="0 0 22 22"><g stroke="#cdd6e4" stroke-width="1.100" fill="none"><path d="M0.800 3h7.200M3 1v6M14 3h6.900M18.600 0.400v4.200M9.100 8.300h5.400M13.400 6.500v5.600M8.300 10.300v10.400M5.900 13.500h4.800M16.100 13.500h4.800M18.600 12.100v8.600M5.400 18.600h5.300M16.100 18.600h4.800M0.800 8.300h1.400"/></g><g fill="#4f6a94"><circle cx="10.850" cy="4.400" r="1.800"/><circle cx="5.550" cy="8.300" r="1.500"/><circle cx="18" cy="8.300" r="2"/><circle cx="13.500" cy="16.200" r="2.300"/><rect x="2.100" y="12.700" width="1.800" height="1.600" rx="0.400"/><rect x="2.100" y="17.800" width="1.800" height="1.600" rx="0.400"/></g></svg>
<div class="tl" style="left:789.2px;top:334.400px">折れ線</div>
<div class="tl" style="left:841.2px;top:334.400px">ドーナツ</div>
<div class="tl" style="left:893.2px;top:334.400px">じょうご</div>
<div class="tl" style="left:945.1px;top:334.400px">散布図</div>
<div class="abs" style="left:794.500px;top:361px;width:204.300px;height:1px;background:#ecebea"></div>
<div class="t" style="left:795.300px;top:374.700px;font-size:9.100px;line-height:11px;color:#4a4a49">グラフ属性</div>
<div class="t" style="left:795px;top:398.800px;font-size:8.300px;line-height:10px;color:#5f5e5c">グラフタイトル</div>
<div class="inp" style="left:794.500px;top:417px;width:197.300px;height:33.800px"></div>
<div class="t" style="left:794.600px;top:452px;font-size:8.300px;line-height:10px;color:#6b6a69">Y 軸</div>
<div class="inp" style="left:794.500px;top:467px;width:183.700px;height:26.800px"></div>
<div class="t" style="left:801.200px;top:474.900px;font-size:8.900px;line-height:11px;color:#181818">作成日</div>
<div class="abs" style="left:981.200px;top:467.400px;width:8.600px;height:25.200px;border-radius:1.500px;overflow:hidden;background:#459edb"><div style="position:absolute;left:0;top:8.400px;width:100%;height:8.400px;background:#1e3461"></div><div style="position:absolute;left:0;top:16.800px;width:100%;height:8.400px;background:#8fdcd3"></div></div>
<div class="t" style="left:794.600px;top:494.300px;font-size:8.300px;line-height:10px;color:#6b6a69">X 軸</div>
<div class="inp" style="left:794.500px;top:508.600px;width:178.200px;height:24px"></div>
<div class="t" style="left:801.200px;top:515.100px;font-size:9.100px;line-height:11px;color:#181818">レコード件数</div>
<div class="abs" style="left:975.900px;top:515px;width:14px;height:14px;border-radius:1.500px;background:#459edb"></div>
<div class="abs" style="left:795px;top:539.200px;width:7.800px;height:1.600px;border-radius:1.500px 1.500px 0 0;background:#9a9a9a"></div>
<div class="abs" style="left:1011px;top:452px;width:5px;height:72px;background:#fff"></div>
<svg class="abs" style="left:0;top:0" width="1024" height="560" viewBox="0 0 1024 560"><rect x="778.300" y="211.950" width="239.300" height="330.600" rx="1.500" fill="none" stroke="#e8416c" stroke-width="4.850"/></svg>
<svg class="abs" style="left:0;top:538px" width="1024" height="8" viewBox="0 538 1024 8"><path d="M0 540.800L2.400 543.600H0z" fill="#1a1a1a"/><path d="M1024 541.800L1021.800 543.600H1024z" fill="#3a3f4a"/></svg>
<svg class="abs" style="left:0;top:0" width="1024" height="560" viewBox="0 0 1024 560"><path d="M866.300 106.900L882.600 118.300 878.300 120.300 888.500 150.600 870.900 123.200 866.300 127.100z" fill="#e8416c"/></svg>
</div>
</body>
</html>
